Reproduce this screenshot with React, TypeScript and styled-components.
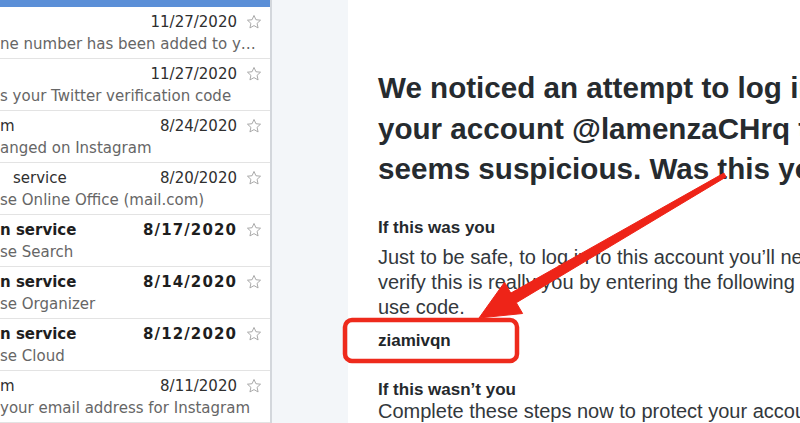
import React from "react";
import styled, { createGlobalStyle } from "styled-components";

const GlobalStyle = createGlobalStyle`
  html, body { margin: 0; padding: 0; background: #ffffff; overflow: hidden; }
  #root { width: 800px; height: 423px; }
`;

const Page = styled.div`
  position: relative;
  display: flex;
  width: 800px;
  height: 423px;
  overflow: hidden;
  background: #ffffff;
`;

const ListPane = styled.div`
  width: 270px;
  flex: none;
  display: flex;
  flex-direction: column;
  background: #ffffff;
  border-right: 2px solid #d3d7dc;
  font-family: "DejaVu Sans", Verdana, sans-serif;
  font-size: 15px;
`;

const SelectedBar = styled.div`
  height: 7px;
  flex: none;
  background: #5b8fd7;
`;

const Row = styled.div`
  box-sizing: border-box;
  height: 52px;
  flex: none;
  display: flex;
  flex-direction: column;
  padding: 4px 8px 0 0;
  border-bottom: 1px solid #e3e3e3;
`;

const TopLine = styled.div`
  display: flex;
  align-items: center;
  height: 22px;
  line-height: 22px;
`;

const Sender = styled.span<{ $bold?: boolean; $indent?: number }>`
  flex: 1;
  white-space: nowrap;
  overflow: hidden;
  padding-left: ${(p) => p.$indent ?? 0}px;
  color: ${(p) => (p.$bold ? "#1e1e1e" : "#2f2f2f")};
  font-weight: ${(p) => (p.$bold ? 700 : 400)};
`;

const DateText = styled.span<{ $bold?: boolean }>`
  white-space: nowrap;
  color: ${(p) => (p.$bold ? "#1e1e1e" : "#2f2f2f")};
  font-weight: ${(p) => (p.$bold ? 700 : 400)};
  letter-spacing: ${(p) => (p.$bold ? "1.1px" : "0")};
`;

const StarBox = styled.span`
  width: 16px;
  height: 16px;
  margin-left: 9px;
  display: flex;
  align-items: center;
  justify-content: center;
  flex: none;
`;

const Subject = styled.div`
  height: 22px;
  line-height: 22px;
  color: #666666;
  white-space: nowrap;
  overflow: hidden;
  text-overflow: ellipsis;
`;

const Gutter = styled.div`
  width: 76px;
  flex: none;
  background: #f3f6f9;
`;

const EmailPane = styled.div`
  flex: 1;
  background: #ffffff;
  padding: 68px 0 0 30px;
  overflow: hidden;
  white-space: nowrap;
  font-family: "Liberation Sans", Arial, Helvetica, sans-serif;
  color: #2b3034;
`;

const Heading = styled.h1`
  margin: 0;
  font-size: 29.6px;
  line-height: 40.5px;
  font-weight: 700;
  color: #262b2f;
`;

const SubHead = styled.div<{ $top: number }>`
  margin-top: ${(p) => p.$top}px;
  font-size: 17px;
  line-height: 22px;
  font-weight: 700;
  color: #25292d;
`;

const Body = styled.p<{ $top: number }>`
  margin: ${(p) => p.$top}px 0 0 0;
  font-size: 20px;
  line-height: 25px;
  color: #33383c;
`;

const Code = styled.div`
  margin-top: 10px;
  font-size: 17px;
  line-height: 22px;
  font-weight: 700;
  color: #222629;
`;

const Overlay = styled.svg`
  position: absolute;
  left: 0;
  top: 0;
  width: 800px;
  height: 423px;
  pointer-events: none;
`;

const StarIcon = () => (
  <svg width="16" height="16" viewBox="0 0 24 24">
    <polygon
      points="12,2.2 14.9,8.6 21.8,9.3 16.6,14 18.1,20.9 12,17.4 5.9,20.9 7.4,14 2.2,9.3 9.1,8.6"
      fill="none"
      stroke="#a3a3a3"
      strokeWidth="1.4"
      strokeLinejoin="round"
    />
  </svg>
);

type Mail = {
  sender: string;
  indent?: number;
  date: string;
  subject: string;
  bold?: boolean;
};

const mails: Mail[] = [
  { sender: "", date: "11/27/2020", subject: "ne number has been added to your account" },
  { sender: "", date: "11/27/2020", subject: "s your Twitter verification code" },
  { sender: "m", date: "8/24/2020", subject: "anged on Instagram" },
  { sender: "service", indent: 13, date: "8/20/2020", subject: "se Online Office (mail.com)" },
  { sender: "n service", date: "8/17/2020", subject: "se Search", bold: true },
  { sender: "n service", date: "8/14/2020", subject: "se Organizer", bold: true },
  { sender: "n service", date: "8/12/2020", subject: "se Cloud", bold: true },
  { sender: "m", date: "8/11/2020", subject: "your email address for Instagram" },
];

// Arrow geometry (annotation drawn over the email)
const tail = { x: 725, y: 175 };
const tip = { x: 479, y: 318 };
const dx = tip.x - tail.x;
const dy = tip.y - tail.y;
const len = Math.hypot(dx, dy);
const ux = dx / len;
const uy = dy / len;
const nx = -uy;
const ny = ux;
const headLen = 40;
const headHalf = 18;
const shaftBase = 5.5;
const shaftTail = 2.2;
const bx = tip.x - ux * headLen;
const by = tip.y - uy * headLen;
const pts = [
  [tail.x + nx * shaftTail, tail.y + ny * shaftTail],
  [bx + nx * shaftBase, by + ny * shaftBase],
  [bx + nx * headHalf, by + ny * headHalf],
  [tip.x, tip.y],
  [bx - nx * headHalf, by - ny * headHalf],
  [bx - nx * shaftBase, by - ny * shaftBase],
  [tail.x - nx * shaftTail, tail.y - ny * shaftTail],
]
  .map(([x, y]) => `${x.toFixed(1)},${y.toFixed(1)}`)
  .join(" ");

export default function App() {
  return (
    <>
      <GlobalStyle />
      <Page>
        <ListPane>
          <SelectedBar />
          {mails.map((m, i) => (
            <Row key={i}>
              <TopLine>
                <Sender $bold={m.bold} $indent={m.indent}>
                  {m.sender}
                </Sender>
                <DateText $bold={m.bold}>{m.date}</DateText>
                <StarBox>
                  <StarIcon />
                </StarBox>
              </TopLine>
              <Subject>{m.subject}</Subject>
            </Row>
          ))}
        </ListPane>
        <Gutter />
        <EmailPane>
          <Heading>
            We noticed an attempt to log in to
            <br />
            your account @lamenzaCHrq that
            <br />
            seems suspicious. Was this you?
          </Heading>
          <SubHead $top={27}>If this was you</SubHead>
          <Body $top={6}>
            Just to be safe, to log in to this account you’ll need to
            <br />
            verify this is really you by entering the following single-
            <br />
            use code.
          </Body>
          <Code>ziamivqn</Code>
          <SubHead $top={27}>If this wasn’t you</SubHead>
          <Body $top={-2}>Complete these steps now to protect your account.</Body>
        </EmailPane>
        <Overlay viewBox="0 0 800 423">
          <rect
            x="345"
            y="320"
            width="172"
            height="41"
            rx="7"
            ry="7"
            fill="none"
            stroke="#ee2a1c"
            strokeWidth="4.5"
          />
          <polygon points={pts} fill="#ee2418" stroke="#ee2418" strokeWidth="1" strokeLinejoin="round" />
        </Overlay>
      </Page>
    </>
  );
}
